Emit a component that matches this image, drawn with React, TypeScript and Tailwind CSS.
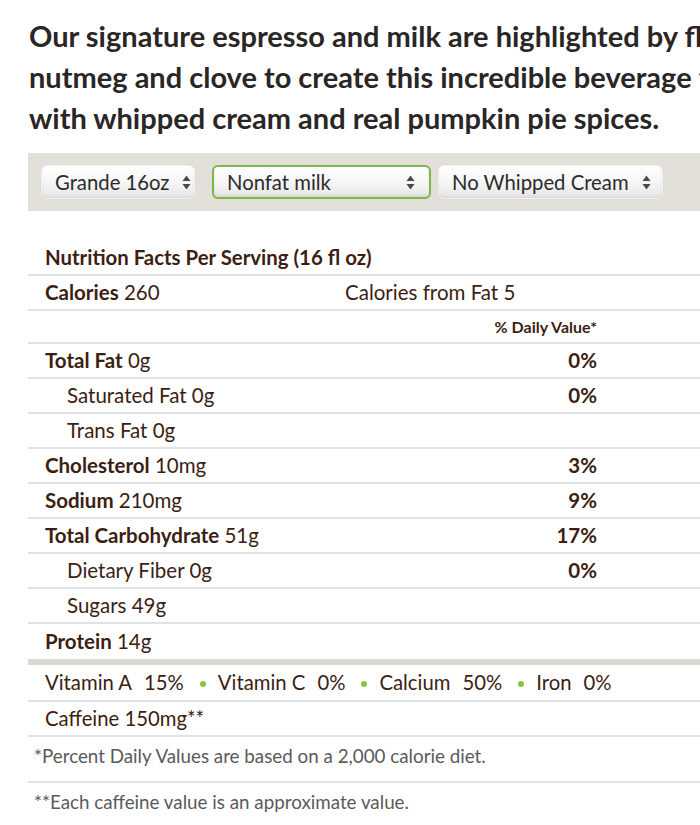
import React from 'react';

const brown = 'text-[#3c1e12]';

const UpDown = () => (
  <svg width="9" height="15" viewBox="0 0 9 15" className="shrink-0">
    <path d="M4.5 0.5 L8.5 6 L0.5 6 Z" fill="#4a4a4a" />
    <path d="M0.5 9 L8.5 9 L4.5 14.5 Z" fill="#4a4a4a" />
  </svg>
);

interface FakeSelectProps {
  label: string;
  width: string;
  active?: boolean;
  pr: string;
}

const FakeSelect: React.FC<FakeSelectProps> = ({ label, width, active, pr }) => (
  <div
    className={`${width} ${pr} h-[34px] flex items-center justify-between pl-[13px] rounded-[6px] bg-gradient-to-b from-white via-[#f6f6f6] to-[#e6e6e6] shadow-[0_0_1px_rgba(0,0,0,0.15),inset_0_-2px_3px_rgba(0,0,0,0.06)] ${
      active ? 'border-2 border-[#7cb749]' : 'border border-[#f2f2f2]'
    }`}
  >
    <span className="text-[20.3px] text-[#2b2b2b] leading-none whitespace-nowrap">{label}</span>
    <UpDown />
  </div>
);

interface RowProps {
  label: string;
  value?: string;
  pct?: string;
  indent?: boolean;
}

const Row: React.FC<RowProps> = ({ label, value, pct, indent }) => (
  <div className={`flex items-center h-[35px] border-b-2 border-[#e2e2e2] pl-[17px] text-[20.5px] ${brown}`}>
    <div className={`w-[300px] whitespace-nowrap ${indent ? 'pl-[22px]' : ''}`}>
      <span className={indent ? '' : 'font-bold'}>{label}</span>
      {value && <span> {value}</span>}
    </div>
    <div className="w-[252px] text-right font-bold">{pct}</div>
  </div>
);

const Dot = () => <span className="inline-block w-[6px] h-[6px] rounded-full bg-[#8dc340] ml-[16px] mr-[12px] translate-y-[1px]" />;

export default function App() {
  return (
    <div className="w-[700px] h-[825px] overflow-hidden bg-white font-['Lato',sans-serif]">
      <div className="w-[1000px] pl-[28px]">
        {/* Descripción */}
        <h2 className="pt-[15px] pl-[1px] text-[29px] leading-[41px] font-bold text-[#2a2625] whitespace-nowrap">
          Our signature espresso and milk are highlighted by flavor notes of pumpkin, cinnamon,
          <br />
          nutmeg and clove to create this incredible beverage that's a fall favorite. Enjoy it topped
          <br />
          with whipped cream and real pumpkin pie spices.
        </h2>

        {/* Opciones */}
        <div className="mt-[15px] h-[58px] bg-[#e3e0d9] flex items-center pl-[13px]">
          <FakeSelect label="Grande 16oz" width="w-[154px]" pr="pr-[3px]" />
          <div className="ml-[17px]">
            <FakeSelect label="Nonfat milk" width="w-[219px]" pr="pr-[14px]" active />
          </div>
          <div className="ml-[7px]">
            <FakeSelect label="No Whipped Cream" width="w-[225px]" pr="pr-[11px]" />
          </div>
        </div>

        {/* Tabla nutricional */}
        <div className="mt-[29px]">
          <div className={`flex items-center h-[36px] border-b-2 border-[#e2e2e2] pl-[17px] text-[20.4px] font-bold ${brown}`}>
            Nutrition Facts Per Serving (16 fl oz)
          </div>
          <div className={`flex items-center h-[35px] border-b-2 border-[#e2e2e2] pl-[17px] text-[20.5px] ${brown}`}>
            <div className="w-[300px]">
              <span className="font-bold">Calories</span> 260
            </div>
            <div>Calories from Fat 5</div>
          </div>
          <div className={`flex items-center h-[33px] border-b-2 border-[#e2e2e2] pl-[17px] text-[16px] font-bold ${brown}`}>
            <div className="w-[552px] text-right">% Daily Value*</div>
          </div>
          <Row label="Total Fat" value="0g" pct="0%" />
          <Row label="Saturated Fat" value="0g" pct="0%" indent />
          <Row label="Trans Fat" value="0g" indent />
          <Row label="Cholesterol" value="10mg" pct="3%" />
          <Row label="Sodium" value="210mg" pct="9%" />
          <Row label="Total Carbohydrate" value="51g" pct="17%" />
          <Row label="Dietary Fiber" value="0g" pct="0%" indent />
          <Row label="Sugars" value="49g" indent />
          <div className={`flex items-center h-[35px] pl-[17px] text-[20.5px] ${brown}`}>
            <span className="font-bold">Protein</span>&nbsp;14g
          </div>
          <div className="h-[6px] bg-[#dbd8d0]" />

          <div className={`flex items-center h-[37px] border-b-2 border-[#e2e2e2] pl-[17px] text-[20.3px] ${brown} whitespace-nowrap`}>
            <span>Vitamin A</span>
            <span className="ml-[12px]">15%</span>
            <Dot />
            <span>Vitamin C</span>
            <span className="ml-[12px]">0%</span>
            <Dot />
            <span>Calcium</span>
            <span className="ml-[12px]">50%</span>
            <Dot />
            <span>Iron</span>
            <span className="ml-[12px]">0%</span>
          </div>
          <div className={`flex items-center h-[35px] border-b-2 border-[#e2e2e2] pl-[17px] text-[20.3px] ${brown}`}>
            Caffeine 150mg**
          </div>

          <div className="h-[46px] border-b-2 border-[#e2e2e2] pl-[6px] pt-[6px] text-[18.8px] leading-[26px] text-[#5a5a5a]">
            *Percent Daily Values are based on a 2,000 calorie diet.
          </div>
          <div className="pl-[6px] pt-[6px] text-[18.8px] leading-[26px] text-[#5a5a5a]">
            **Each caffeine value is an approximate value.
          </div>
        </div>
      </div>
    </div>
  );
}
